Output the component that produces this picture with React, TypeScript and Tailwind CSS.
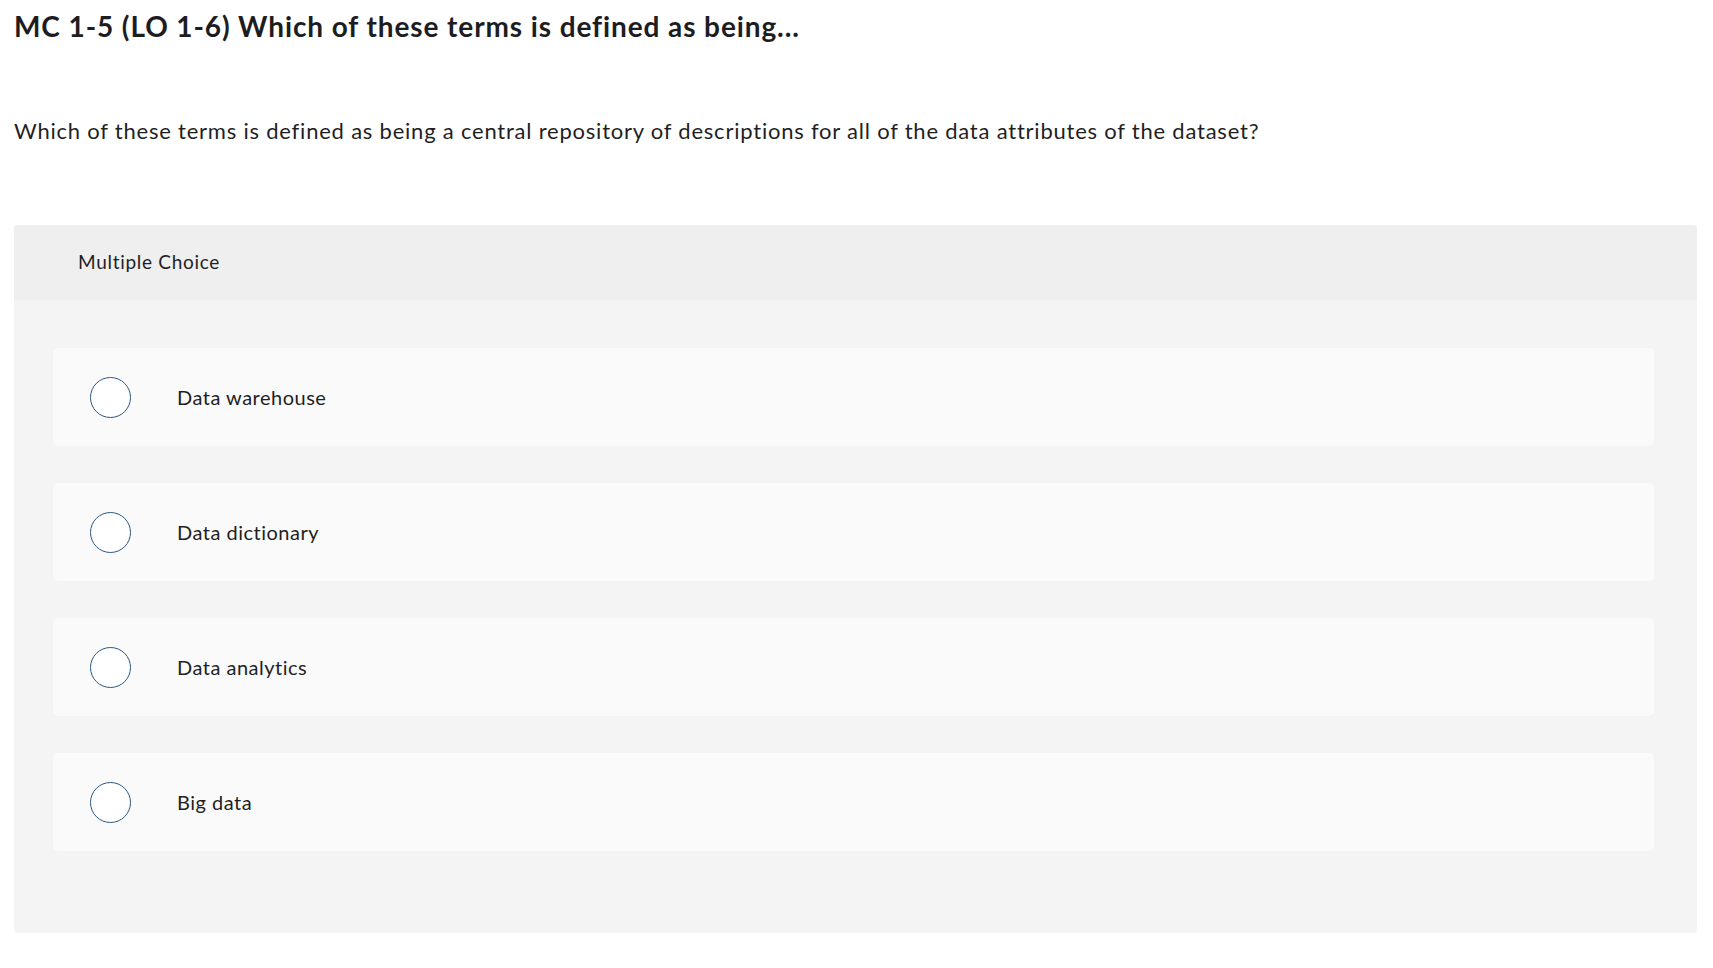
import React from "react";

const options = ["Data warehouse", "Data dictionary", "Data analytics", "Big data"];

export default function App() {
  return (
    <div className="min-h-[968px] bg-white pl-[14px] pr-[16px] text-[#1f1f1f]" style={{ fontFamily: "Lato, 'Noto Sans', sans-serif" }}>
      <h1 className="pt-[8px] text-[28px] font-bold leading-[36px] tracking-[0.9px] text-[#1d1d1f]">
        MC 1-5 (LO 1-6) Which of these terms is defined as being...
      </h1>
      <p className="mt-[72px] text-[22px] leading-[30px] tracking-[0.78px] text-[#1f1f1f]">
        Which of these terms is defined as being a central repository of descriptions for all of the data attributes of the dataset?
      </p>
      <div className="mt-[79px] overflow-hidden rounded-[4px] bg-[#f4f4f4]">
        <div className="flex h-[75px] items-center bg-[#efefef] pl-[64px] text-[19px] tracking-[0.7px] text-[#1f1f1f]">
          Multiple Choice
        </div>
        <div className="flex flex-col gap-[37px] pb-[82px] pl-[39px] pr-[43px] pt-[48px]">
          {options.map((o) => (
            <label key={o} className="flex h-[98px] items-center rounded-[5px] bg-[#fafafa] pl-[37px]">
              <span className="h-[41px] w-[41px] shrink-0 rounded-full border-[1.6px] border-[#2b5782] bg-white" />
              <span className="ml-[46px] text-[20px] tracking-[0.5px] text-[#1f1f1f]">{o}</span>
            </label>
          ))}
        </div>
      </div>
    </div>
  );
}
